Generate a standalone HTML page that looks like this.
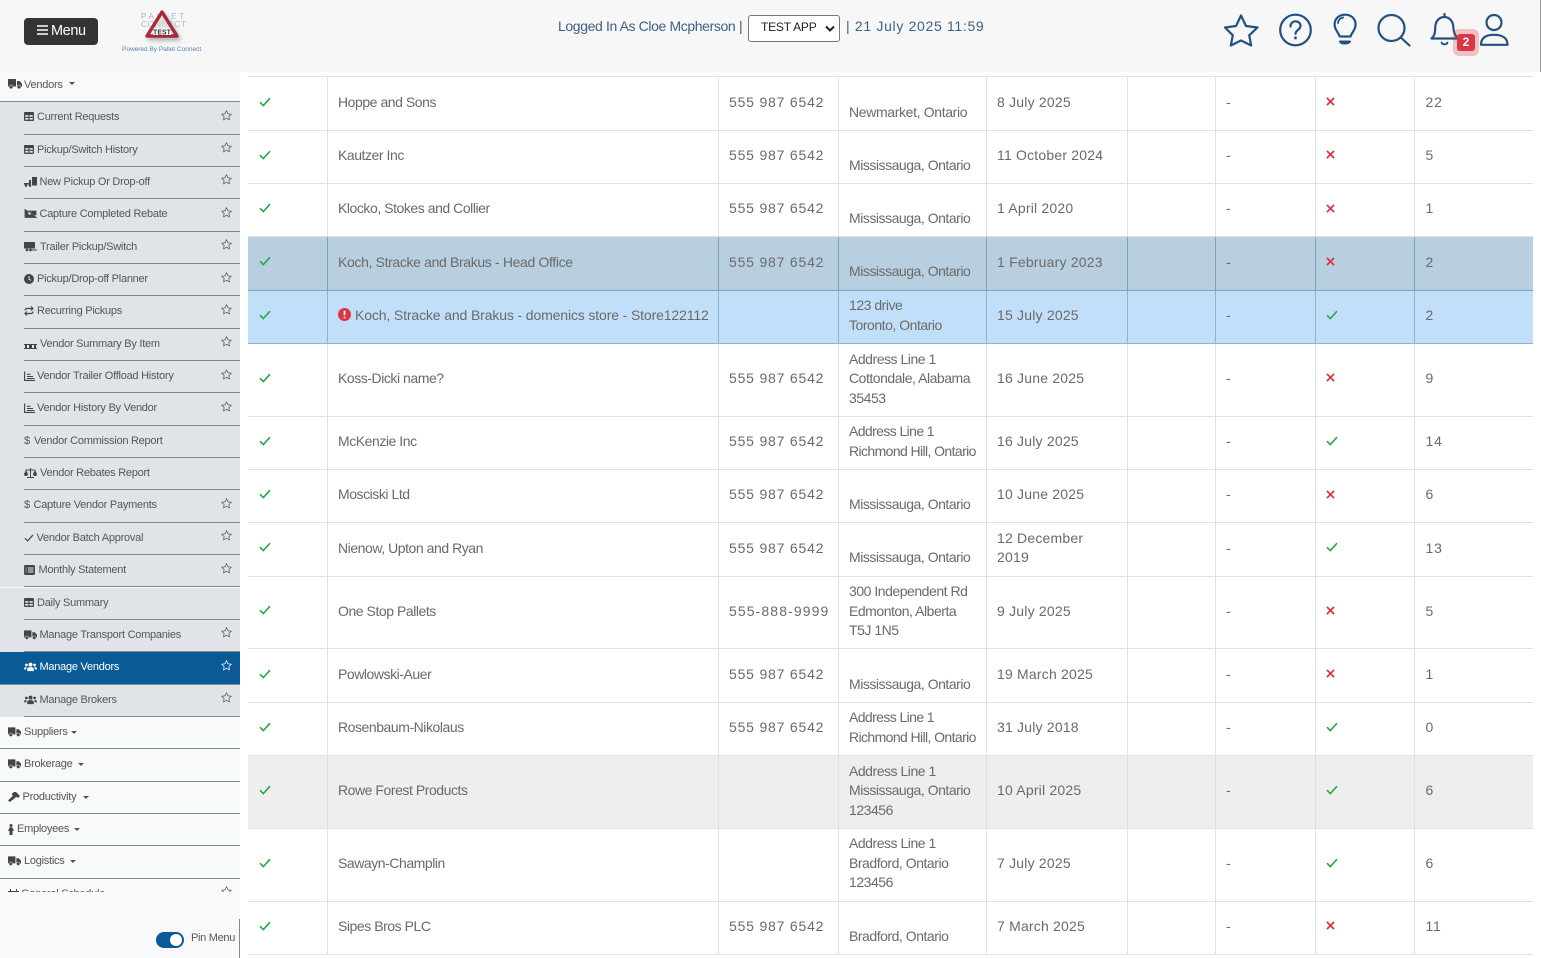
<!DOCTYPE html>
<html lang="en">
<head>
<meta charset="utf-8">
<title>Manage Vendors</title>
<style>
*{box-sizing:border-box}
html,body{margin:0;padding:0;width:1541px;height:958px;overflow:hidden;background:#fff;font-family:"Liberation Sans",sans-serif;color:#666}
#hdr{position:absolute;left:0;top:0;width:1541px;height:72px;background:#f7f7f7;border-right:1px solid #999}
#menu{position:absolute;left:24px;top:18px;width:74px;height:27px;background:#343434;border-radius:4px;color:#fff;font-size:14.5px;line-height:25px;padding-left:13px;letter-spacing:-.4px}
#menu svg{position:absolute;left:13px;top:7px}
#menu span{position:absolute;left:27px;top:1px}
.pc{position:absolute;color:#a9b7c2;font-size:8px;letter-spacing:2.800px;line-height:8px;white-space:nowrap}
#pow{position:absolute;left:122px;top:45px;font-size:6.5px;color:#5c7fa6;white-space:nowrap;line-height:9px;letter-spacing:0}
#who{position:absolute;left:558px;top:17px;font-size:14px;line-height:18px;color:#3c6186;white-space:nowrap;letter-spacing:-.38px}
#pipe{position:absolute;left:739px;top:17px;font-size:14px;line-height:18px;color:#3c6186}
#date{position:absolute;left:846px;top:17px;font-size:14px;line-height:18px;color:#3c6186;white-space:nowrap;letter-spacing:.68px}
#sel{position:absolute;left:748px;top:15px;width:92px;height:27px;background:#fff;border:1px solid #777;border-radius:3px;color:#222;font-size:12px;line-height:23px;padding-left:12px;letter-spacing:-.2px}
#sel svg{position:absolute;right:4px;top:9px}
#side{position:absolute;left:0;top:72px;width:240px;height:820px;background:#f8f9fa;overflow:hidden}
.r{position:absolute;left:0;width:240px;height:32.35px;font-size:11px;line-height:31px;white-space:nowrap;color:#555;letter-spacing:-.25px}
.s{background:#e0e4e9}
.r:after{content:"";position:absolute;left:0;right:0;bottom:0;height:1px;background:#7f8a8f}
.s:after{left:24px}
.a{background:#0a5a96;color:#fff}
.r>b{position:absolute;top:0;font-weight:normal}
.r>svg{position:absolute;top:10px}
.r>svg.st{left:221px;top:7.500px}
.car{position:absolute;top:14px;width:0;height:0;border-left:3px solid transparent;border-right:3px solid transparent;border-top:3px solid #555}
#bot{position:absolute;left:0;top:892px;width:240px;height:66px;background:#f8f9fa;border-right:0}
#bl{position:absolute;left:239px;top:919px;width:1px;height:39px;background:#888}
#tg{position:absolute;left:156px;top:932px;width:28px;height:16px;background:#0a5a96;border-radius:8px}
#tg:after{content:"";position:absolute;right:2px;top:2px;width:12px;height:12px;background:#fff;border-radius:50%}
#pin{position:absolute;left:191px;top:931px;font-size:11px;line-height:14px;color:#555;white-space:nowrap;letter-spacing:-.3px}
table{position:absolute;left:248px;top:76.400px;width:1285px;border-collapse:collapse;table-layout:fixed;font-size:14px;line-height:19.500px;color:#6a6a6a}
td{border:1px solid #dee2e6;padding:0 0 2px 10.500px;vertical-align:middle;white-space:nowrap}
td:first-child{border-left:0;padding-left:11px}
td:last-child{border-right:0;padding-left:11px}
td:nth-child(2){letter-spacing:-.45px}
tr.h td{height:53.300px}
tr.t td{height:72.800px}
.n{letter-spacing:.8px}
.d{letter-spacing:.2px}
.ad{letter-spacing:-.47px}
td>svg{display:block;position:relative;top:-1px}
tr.x td{background:#b8cfdf;border-color:#7fa3bd}
tr.y td{background:#c2dffa;border-color:#8fb2cf}
tr.g td{background:#eee}
</style>
</head>
<body>
<svg width="0" height="0" style="position:absolute">
<defs>
<symbol id="ck" viewBox="0 0 12 10"><path d="M1 5.200 4.300 8.600 11 1.200" fill="none" stroke="#28a745" stroke-width="1.600"/></symbol>
<symbol id="xx" viewBox="0 0 10 10"><path d="M1 1 9 9M9 1 1 9" fill="none" stroke="#dc3545" stroke-width="1.900"/></symbol>
<symbol id="st" viewBox="0 0 12 12"><path d="M6 .8 7.600 4.100 11.200 4.600 8.600 7.100 9.200 10.700 6 9 2.800 10.700 3.400 7.100 .8 4.600 4.400 4.100Z" fill="none" stroke="currentColor" stroke-width=".8"/></symbol>
<symbol id="tb" viewBox="0 0 11 10"><path fill-rule="evenodd" d="M1 0h9a1 1 0 0 1 1 1v8a1 1 0 0 1-1 1H1a1 1 0 0 1-1-1V1a1 1 0 0 1 1-1ZM1.300 3.500v1.800h3.500V3.500ZM6 3.500v1.800h3.700V3.500ZM1.300 6.500v2h3.500v-2ZM6 6.500v2h3.700v-2Z" fill="#444"/></symbol>
<symbol id="tr" viewBox="0 0 14 10"><path d="M0 0h8v7.500H0ZM9 2h2.600L14 4.700v3H9Z" fill="#444"/><circle cx="3" cy="8" r="1.900" fill="#444" stroke="#e0e4ea" stroke-width=".6"/><circle cx="11" cy="8" r="1.900" fill="#444" stroke="#e0e4ea" stroke-width=".6"/></symbol>
<symbol id="us" viewBox="0 0 14 10"><g fill="currentColor"><circle cx="7" cy="2.400" r="2.100"/><circle cx="2.600" cy="2.800" r="1.500"/><circle cx="11.400" cy="2.800" r="1.500"/><path d="M3.500 9.500V7.500C3.500 5.800 5 5.200 7 5.200s3.500.6 3.500 2.300v2ZM0 7.500C0 5.500 1.200 4.800 3 5 2.500 5.700 2.500 6.500 2.500 7.500ZM14 7.500c0-2-1.200-2.700-3-2.500.5.700.5 1.500.5 2.500Z"/></g></symbol>
<symbol id="ch" viewBox="0 0 11 10"><path d="M.6 .5V9.400H11M3 5.500h6M3 7.500h7.500M3 3.300h3.500" fill="none" stroke="#444" stroke-width="1.100"/></symbol>
</defs>
</svg>

<div id="hdr">
  <div id="menu"><svg width="11" height="10" viewBox="0 0 11 10"><path d="M0 1h11M0 5h11M0 9h11" stroke="#fff" stroke-width="1.400"/></svg><span>Menu</span></div>
  <div class="pc" style="left:141px;top:13px">PALLET</div>
  <div class="pc" style="left:141px;top:20px;letter-spacing:.5px;font-size:8.500px">CONNECT</div>
  <svg style="position:absolute;left:143px;top:8px;filter:drop-shadow(2px 3px 2px rgba(90,90,90,.45))" width="40" height="34" viewBox="0 0 40 34"><path d="M19 4 4 28H34Z" fill="#fff" fill-opacity=".5" stroke="#a8293a" stroke-width="3.400" stroke-linejoin="round"/><rect x="10" y="20.500" width="18" height="6.500" fill="#fff"/><text x="19" y="26.500" font-family="Liberation Sans" font-size="7" font-weight="bold" fill="#333" text-anchor="middle">TEST</text></svg>
  <div id="pow">Powered By Pallet Connect</div>
  <div id="who">Logged In As Cloe Mcpherson</div>
  <div id="pipe">|</div>
  <div id="sel">TEST APP<svg width="10" height="8" viewBox="0 0 10 8"><path d="M1 1.500 5 5.500 9 1.500" fill="none" stroke="#222" stroke-width="2"/></svg></div>
  <div id="date">| 21 July 2025 11:59</div>
  <svg style="position:absolute;left:1220px;top:8px" width="300" height="48" viewBox="1220 8 300 48">
    <g fill="none" stroke="#22527f" stroke-width="2.200" stroke-linejoin="round" stroke-linecap="round">
      <path d="M1241 15.500 1246 26 1257.500 27.500 1249.200 35.300 1251.200 45.500 1241 40.500 1230.800 45.500 1232.800 35.300 1225 27.500 1236 26Z"/>
      <circle cx="1295.500" cy="30" r="15.300"/>
      <path d="M1290.500 26.500c0-6.800 10-6.800 10-.5 0 3.700-5 4-5 7.800"/>
      <path d="M1295.500 37.500v.6" stroke-width="2.600"/>
      <path d="M1339.600 36.500c-.6-3.500-5-6.300-5-12 0-6 4.700-9.800 10.500-9.800s10.500 3.800 10.500 9.800c0 5.700-4.400 8.500-5 12Z"/>
      <path d="M1338 23c.3-3 2.400-5 5.300-5.500" stroke-width="1.800"/>
      <path d="M1340 41.500c1 2.700 8.500 2.700 10 0Z" stroke-width="2"/>
      <circle cx="1391.500" cy="28" r="13"/>
      <path d="M1400.800 37.500 1409.500 45.500"/>
      <path d="M1431.500 38.500c4-3.500 3.500-8 3.800-12 .4-5.500 4-9.500 9-9.500s8.600 4 9 9.500c.3 4 .5 7.500 4.500 12Z"/>
      <path d="M1444.500 16v-2"/>
      <path d="M1441.500 42.500c1 2.500 5 2.500 6 0" stroke-width="1.800"/>
      <circle cx="1494" cy="22.500" r="7.500"/>
      <path d="M1481 44.800c0-7 5-10 13-10s13.500 3 13.500 10Z"/>
    </g>
  </svg>
  <div style="position:absolute;left:1453px;top:29px;width:26px;height:27px;background:rgba(220,53,69,.28);border-radius:6px"></div>
  <div style="position:absolute;left:1457px;top:34px;width:18px;height:17px;background:#dc3545;border-radius:3px;color:#fff;font-size:12px;font-weight:bold;line-height:17px;text-align:center">2</div>
</div>

<table>
<colgroup><col style="width:79px"><col style="width:391px"><col style="width:120px"><col style="width:148px"><col style="width:141px"><col style="width:88px"><col style="width:100px"><col style="width:99px"><col style="width:119px"></colgroup>
<tr class="h"><td><svg width="12" height="10"><use href="#ck"/></svg></td><td>Hoppe and Sons</td><td class="n">555 987 6542</td><td class="ad" style="letter-spacing:-.35px"><br>Newmarket, Ontario</td><td class="d">8 July 2025</td><td></td><td>-</td><td><svg width="9" height="9"><use href="#xx"/></svg></td><td class="n">22</td></tr>
<tr class="h"><td><svg width="12" height="10"><use href="#ck"/></svg></td><td>Kautzer Inc</td><td class="n">555 987 6542</td><td class="ad"><br>Mississauga, Ontario</td><td class="d">11 October 2024</td><td></td><td>-</td><td><svg width="9" height="9"><use href="#xx"/></svg></td><td class="n">5</td></tr>
<tr class="h"><td><svg width="12" height="10"><use href="#ck"/></svg></td><td>Klocko, Stokes and Collier</td><td class="n">555 987 6542</td><td class="ad"><br>Mississauga, Ontario</td><td class="d">1 April 2020</td><td></td><td>-</td><td><svg width="9" height="9"><use href="#xx"/></svg></td><td class="n">1</td></tr>
<tr class="h x"><td><svg width="12" height="10"><use href="#ck"/></svg></td><td style="letter-spacing:-.35px">Koch, Stracke and Brakus - Head Office</td><td class="n">555 987 6542</td><td class="ad"><br>Mississauga, Ontario</td><td class="d">1 February 2023</td><td></td><td>-</td><td><svg width="9" height="9"><use href="#xx"/></svg></td><td class="n">2</td></tr>
<tr class="h y"><td><svg width="12" height="10"><use href="#ck"/></svg></td><td style="letter-spacing:-.13px"><svg width="13" height="13" viewBox="0 0 13 13" style="display:inline-block;vertical-align:-2px;margin-right:4px"><circle cx="6.500" cy="6.500" r="6.500" fill="#dc3545"/><path d="M6.500 2.800v4.400M6.500 8.800v1.500" stroke="#fff" stroke-width="1.700"/></svg>Koch, Stracke and Brakus - domenics store - Store122112</td><td class="n"></td><td class="ad">123 drive<br>Toronto, Ontario</td><td class="d">15 July 2025</td><td></td><td>-</td><td><svg width="12" height="10"><use href="#ck"/></svg></td><td class="n">2</td></tr>
<tr class="t"><td><svg width="12" height="10"><use href="#ck"/></svg></td><td>Koss-Dicki name?</td><td class="n">555 987 6542</td><td class="ad">Address Line 1<br>Cottondale, Alabama<br>35453</td><td class="d">16 June 2025</td><td></td><td>-</td><td><svg width="9" height="9"><use href="#xx"/></svg></td><td class="n">9</td></tr>
<tr class="h"><td><svg width="12" height="10"><use href="#ck"/></svg></td><td>McKenzie Inc</td><td class="n">555 987 6542</td><td class="ad" style="letter-spacing:-.6px">Address Line 1<br>Richmond Hill, Ontario</td><td class="d">16 July 2025</td><td></td><td>-</td><td><svg width="12" height="10"><use href="#ck"/></svg></td><td class="n">14</td></tr>
<tr class="h"><td><svg width="12" height="10"><use href="#ck"/></svg></td><td>Mosciski Ltd</td><td class="n">555 987 6542</td><td class="ad"><br>Mississauga, Ontario</td><td class="d">10 June 2025</td><td></td><td>-</td><td><svg width="9" height="9"><use href="#xx"/></svg></td><td class="n">6</td></tr>
<tr class="h"><td><svg width="12" height="10"><use href="#ck"/></svg></td><td>Nienow, Upton and Ryan</td><td class="n">555 987 6542</td><td class="ad"><br>Mississauga, Ontario</td><td class="d">12 December<br>2019</td><td></td><td>-</td><td><svg width="12" height="10"><use href="#ck"/></svg></td><td class="n">13</td></tr>
<tr class="t"><td><svg width="12" height="10"><use href="#ck"/></svg></td><td>One Stop Pallets</td><td class="n" style="letter-spacing:1.100px">555-888-9999</td><td class="ad">300 Independent Rd<br>Edmonton, Alberta<br>T5J 1N5</td><td class="d">9 July 2025</td><td></td><td>-</td><td><svg width="9" height="9"><use href="#xx"/></svg></td><td class="n">5</td></tr>
<tr class="h"><td><svg width="12" height="10"><use href="#ck"/></svg></td><td>Powlowski-Auer</td><td class="n">555 987 6542</td><td class="ad"><br>Mississauga, Ontario</td><td class="d">19 March 2025</td><td></td><td>-</td><td><svg width="9" height="9"><use href="#xx"/></svg></td><td class="n">1</td></tr>
<tr class="h"><td><svg width="12" height="10"><use href="#ck"/></svg></td><td>Rosenbaum-Nikolaus</td><td class="n">555 987 6542</td><td class="ad" style="letter-spacing:-.6px">Address Line 1<br>Richmond Hill, Ontario</td><td class="d">31 July 2018</td><td></td><td>-</td><td><svg width="12" height="10"><use href="#ck"/></svg></td><td class="n">0</td></tr>
<tr class="t g"><td><svg width="12" height="10"><use href="#ck"/></svg></td><td>Rowe Forest Products</td><td class="n"></td><td class="ad">Address Line 1<br>Mississauga, Ontario<br>123456</td><td class="d">10 April 2025</td><td></td><td>-</td><td><svg width="12" height="10"><use href="#ck"/></svg></td><td class="n">6</td></tr>
<tr class="t"><td><svg width="12" height="10"><use href="#ck"/></svg></td><td>Sawayn-Champlin</td><td class="n"></td><td class="ad">Address Line 1<br>Bradford, Ontario<br>123456</td><td class="d">7 July 2025</td><td></td><td>-</td><td><svg width="12" height="10"><use href="#ck"/></svg></td><td class="n">6</td></tr>
<tr class="h"><td><svg width="12" height="10"><use href="#ck"/></svg></td><td>Sipes Bros PLC</td><td class="n">555 987 6542</td><td class="ad"><br>Bradford, Ontario</td><td class="d">7 March 2025</td><td></td><td>-</td><td><svg width="9" height="9"><use href="#xx"/></svg></td><td class="n">11</td></tr>
</table>

<div id="side">
<div class="r" style="top:-2.100px;height:32px;line-height:29px"><svg style="left:8px;top:9px" width="14" height="10"><use href="#tr"/></svg><b style="left:24px;top:1px">Vendors</b><span class="car" style="left:69px;top:12px"></span></div>
<div class="r s" style="top:30.250px"><svg style="left:24px" width="10" height="9"><use href="#tb"/></svg><b style="left:37px">Current Requests</b><svg class="st" width="11" height="11" style="color:#555"><use href="#st"/></svg></div>
<div class="r s" style="top:62.600px"><svg style="left:24px" width="10" height="9"><use href="#tb"/></svg><b style="left:37px">Pickup/Switch History</b><svg class="st" width="11" height="11" style="color:#555"><use href="#st"/></svg></div>
<div class="r s" style="top:94.950px"><svg style="left:24px" width="13" height="10" viewBox="0 0 13 10"><path d="M0 6h5V3h2v4.500H0ZM8 0h5v8.500H8Z" fill="#444"/><circle cx="2" cy="8.500" r="1.300" fill="#444"/><circle cx="6" cy="8.500" r="1.300" fill="#444"/></svg><b style="left:39.500px">New Pickup Or Drop-off</b><svg class="st" width="11" height="11" style="color:#555"><use href="#st"/></svg></div>
<div class="r s" style="top:127.300px"><svg style="left:24px" width="13" height="10" viewBox="0 0 13 10"><path d="M1 0v8.500h12M4 2h3v4H4ZM8 2h4v4H8Z" fill="#444" stroke="#444" stroke-width=".8"/></svg><b style="left:39.500px">Capture Completed Rebate</b><svg class="st" width="11" height="11" style="color:#555"><use href="#st"/></svg></div>
<div class="r s" style="top:159.650px"><svg style="left:24px" width="13" height="10" viewBox="0 0 13 10"><path d="M0 0h11v6.500H0ZM8 7.500h5v1H8Z" fill="#444"/><circle cx="3" cy="8" r="1.400" fill="#444"/><circle cx="6.500" cy="8" r="1.400" fill="#444"/></svg><b style="left:40px">Trailer Pickup/Switch</b><svg class="st" width="11" height="11" style="color:#555"><use href="#st"/></svg></div>
<div class="r s" style="top:192px"><svg style="left:24px" width="10" height="10" viewBox="0 0 10 10"><circle cx="5" cy="5" r="5" fill="#444"/><path d="M5 2v3.300l2 1" fill="none" stroke="#e0e4ea"/></svg><b style="left:37px">Pickup/Drop-off Planner</b><svg class="st" width="11" height="11" style="color:#555"><use href="#st"/></svg></div>
<div class="r s" style="top:224.350px"><svg style="left:24px" width="10" height="10" viewBox="0 0 10 10"><path d="M1 4.500C1 3 2 2.500 3 2.500h5M7 .5 9 2.500 7 4.500M9 5.500C9 7 8 7.500 7 7.500H2M3 5.500 1 7.500 3 9.500" fill="none" stroke="#444" stroke-width="1.200"/></svg><b style="left:37px">Recurring Pickups</b><svg class="st" width="11" height="11" style="color:#555"><use href="#st"/></svg></div>
<div class="r s" style="top:256.700px"><svg style="left:24px;top:13px" width="13" height="8" viewBox="0 0 13 8"><path d="M0 2h13v1H0ZM0 6h13v1H0ZM1 3h2v3H1ZM5 3h3v3H5ZM10 3h2v3h-2Z" fill="#444"/></svg><b style="left:40px">Vendor Summary By Item</b><svg class="st" width="11" height="11" style="color:#555"><use href="#st"/></svg></div>
<div class="r s" style="top:289.050px"><svg style="left:24px" width="11" height="10"><use href="#ch"/></svg><b style="left:37px">Vendor Trailer Offload History</b><svg class="st" width="11" height="11" style="color:#555"><use href="#st"/></svg></div>
<div class="r s" style="top:321.400px"><svg style="left:24px" width="11" height="10"><use href="#ch"/></svg><b style="left:37px">Vendor History By Vendor</b><svg class="st" width="11" height="11" style="color:#555"><use href="#st"/></svg></div>
<div class="r s" style="top:353.750px"><b style="left:24px">$</b><b style="left:34px">Vendor Commission Report</b></div>
<div class="r s" style="top:386.100px"><svg style="left:24px" width="13" height="10" viewBox="0 0 13 10"><path d="M6.500 0v9M3 9.500h7M1.500 2h10" stroke="#444" fill="none"/><path d="M0 6 2 2 4 6a2 2 0 0 1-4 0ZM9 6l2-4 2 4a2 2 0 0 1-4 0Z" fill="#444"/></svg><b style="left:40px">Vendor Rebates Report</b></div>
<div class="r s" style="top:418.450px"><b style="left:24px">$</b><b style="left:33.500px">Capture Vendor Payments</b><svg class="st" width="11" height="11" style="color:#555"><use href="#st"/></svg></div>
<div class="r s" style="top:450.800px"><svg style="left:24px;top:11px" width="10" height="8" viewBox="0 0 12 10"><path d="M1 5.200 4.300 8.600 11 1.200" fill="none" stroke="#444" stroke-width="1.500"/></svg><b style="left:36.500px">Vendor Batch Approval</b><svg class="st" width="11" height="11" style="color:#555"><use href="#st"/></svg></div>
<div class="r s" style="top:483.150px"><svg style="left:24px" width="11" height="10" viewBox="0 0 11 10"><rect width="11" height="10" rx="1.500" fill="#444"/><path d="M1.500 3h1M1.500 5h1M1.500 7h1M4 3h5.500M4 5h5.500M4 7h5.500" stroke="#e0e4ea"/></svg><b style="left:38.500px">Monthly Statement</b><svg class="st" width="11" height="11" style="color:#555"><use href="#st"/></svg></div>
<div class="r s" style="top:515.500px"><svg style="left:24px" width="10" height="9"><use href="#tb"/></svg><b style="left:37px">Daily Summary</b></div>
<div class="r s" style="top:547.850px"><svg style="left:24px" width="13" height="10"><use href="#tr"/></svg><b style="left:39.500px">Manage Transport Companies</b><svg class="st" width="11" height="11" style="color:#555"><use href="#st"/></svg></div>
<div class="r a" style="top:580.200px"><svg style="left:24px;color:#fff" width="13" height="10"><use href="#us"/></svg><b style="left:39.500px">Manage Vendors</b><svg class="st" width="11" height="11" style="color:#fff"><use href="#st"/></svg></div>
<div class="r s" style="top:612.550px"><svg style="left:24px;color:#444" width="13" height="10"><use href="#us"/></svg><b style="left:39.500px">Manage Brokers</b><svg class="st" width="11" height="11" style="color:#555"><use href="#st"/></svg></div>
<div class="r" style="top:644.900px"><svg style="left:8px" width="13" height="10"><use href="#tr"/></svg><b style="left:24px">Suppliers</b><span class="car" style="left:71px"></span></div>
<div class="r" style="top:677.250px"><svg style="left:8px" width="13" height="10"><use href="#tr"/></svg><b style="left:24px">Brokerage</b><span class="car" style="left:78px"></span></div>
<div class="r" style="top:709.600px"><svg style="left:8px" width="12" height="10" viewBox="0 0 12 10"><path d="M0 8.500 5 3.500 3.500 2 6 0h2L12 4 10 6 8.500 4.800 2 10Z" fill="#444"/></svg><b style="left:22.500px">Productivity</b><span class="car" style="left:83px"></span></div>
<div class="r" style="top:741.950px"><svg style="left:8px" width="6" height="11" viewBox="0 0 6 11"><circle cx="3" cy="1.500" r="1.500" fill="#444"/><path d="M1.800 3.300h2.400L6 7H4.500v4H1.500V7H0Z" fill="#444"/></svg><b style="left:17px">Employees</b><span class="car" style="left:74px"></span></div>
<div class="r" style="top:774.300px"><svg style="left:8px" width="13" height="10"><use href="#tr"/></svg><b style="left:24px">Logistics</b><span class="car" style="left:70px"></span></div>
<div class="r" style="top:806.650px"><svg style="left:8px" width="11" height="10" viewBox="0 0 11 10"><path d="M0 2h11v8H0ZM2 0h1v2H2ZM8 0h1v2H8Z" fill="#444"/></svg><b style="left:21px">General Schedule</b><svg class="st" width="11" height="11" style="color:#555"><use href="#st"/></svg></div>
</div>
<div id="bot"></div>
<div id="bl"></div>
<div id="tg"></div>
<div id="pin">Pin Menu</div>
</body>
</html>
